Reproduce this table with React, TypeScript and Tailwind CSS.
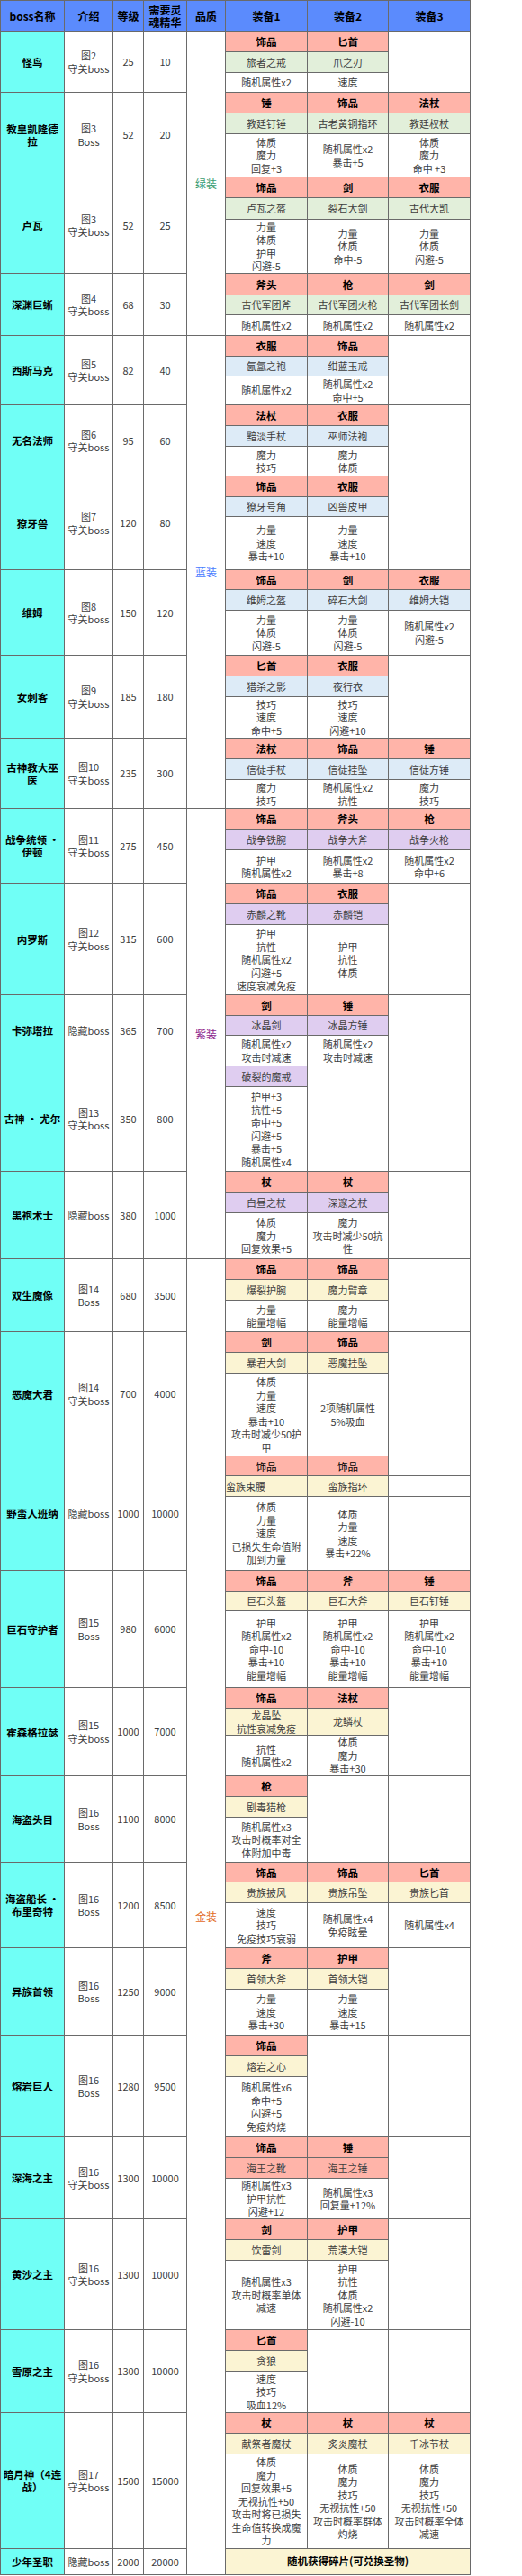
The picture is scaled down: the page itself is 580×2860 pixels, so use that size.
import React from 'react';

type EqObj = { t?: string; n: string[]; a: string[]; tn?: boolean; left?: boolean; salmon?: boolean };
type Eq = EqObj | null | 'grid';
type Boss = {
  name: string;
  intro: string[];
  lv: string;
  es: string;
  h: string[];
  tier: 'g' | 'b' | 'p' | 'y';
  eq?: Eq[];
  q?: { label: string; cls: string };
  final?: boolean;
};

const A19 = ['护甲', '随机属性x2', '命中-10', '暴击+10', '能量增幅'];

const rows: Boss[] = [
  { name: '怪鸟', intro: ['图2', '守关boss'], lv: '25', es: '10', h: ['h-[23px]', 'h-[23px]', 'h-[22px]'], tier: 'g', q: { label: '绿装', cls: 'text-[#3a9c70]' },
    eq: [{ t: '饰品', n: ['旅者之戒'], a: ['随机属性x2'] }, { t: '匕首', n: ['爪之刃'], a: ['速度'] }, null] },
  { name: '教皇凯隆德拉', intro: ['图3', 'Boss'], lv: '52', es: '20', h: ['h-[23px]', 'h-[23px]', 'h-[48px]'], tier: 'g',
    eq: [{ t: '锤', n: ['教廷钉锤'], a: ['体质', '魔力', '回复+3'] }, { t: '饰品', n: ['古老黄铜指环'], a: ['随机属性x2', '暴击+5'] }, { t: '法杖', n: ['教廷权杖'], a: ['体质', '魔力', '命中 +3'] }] },
  { name: '卢瓦', intro: ['图3', '守关boss'], lv: '52', es: '25', h: ['h-[23px]', 'h-[24px]', 'h-[60px]'], tier: 'g',
    eq: [{ t: '饰品', n: ['卢瓦之盔'], a: ['力量', '体质', '护甲', '闪避-5'] }, { t: '剑', n: ['裂石大剑'], a: ['力量', '体质', '命中-5'] }, { t: '衣服', n: ['古代大凯'], a: ['力量', '体质', '闪避-5'] }] },
  { name: '深渊巨蜥', intro: ['图4', '守关boss'], lv: '68', es: '30', h: ['h-[24px]', 'h-[22px]', 'h-[23px]'], tier: 'g',
    eq: [{ t: '斧头', n: ['古代军团斧'], a: ['随机属性x2'] }, { t: '枪', n: ['古代军团火枪'], a: ['随机属性x2'] }, { t: '剑', n: ['古代军团长剑'], a: ['随机属性x2'] }] },
  { name: '西斯马克', intro: ['图5', '守关boss'], lv: '82', es: '40', h: ['h-[23px]', 'h-[22px]', 'h-[32px]'], tier: 'b', q: { label: '蓝装', cls: 'text-[#4a7bff]' },
    eq: [{ t: '衣服', n: ['氤氲之袍'], a: ['随机属性x2'] }, { t: '饰品', n: ['绀蓝玉戒'], a: ['随机属性x2', '命中+5'] }, null] },
  { name: '无名法师', intro: ['图6', '守关boss'], lv: '95', es: '60', h: ['h-[23px]', 'h-[23px]', 'h-[33px]'], tier: 'b',
    eq: [{ t: '法杖', n: ['黯淡手杖'], a: ['魔力', '技巧'] }, { t: '衣服', n: ['巫师法袍'], a: ['魔力', '体质'] }, null] },
  { name: '獠牙兽', intro: ['图7', '守关boss'], lv: '120', es: '80', h: ['h-[23px]', 'h-[22px]', 'h-[59px]'], tier: 'b',
    eq: [{ t: '饰品', n: ['獠牙号角'], a: ['力量', '速度', '暴击+10'] }, { t: '衣服', n: ['凶兽皮甲'], a: ['力量', '速度', '暴击+10'] }, null] },
  { name: '维姆', intro: ['图8', '守关boss'], lv: '150', es: '120', h: ['h-[22px]', 'h-[23px]', 'h-[50px]'], tier: 'b',
    eq: [{ t: '饰品', n: ['维姆之盔'], a: ['力量', '体质', '闪避-5'] }, { t: '剑', n: ['碎石大剑'], a: ['力量', '体质', '闪避-5'] }, { t: '衣服', n: ['维姆大铠'], a: ['随机属性x2', '闪避-5'] }] },
  { name: '女刺客', intro: ['图9', '守关boss'], lv: '185', es: '180', h: ['h-[23px]', 'h-[23px]', 'h-[46px]'], tier: 'b',
    eq: [{ t: '匕首', n: ['猎杀之影'], a: ['技巧', '速度', '命中+5'] }, { t: '衣服', n: ['夜行衣'], a: ['技巧', '速度', '闪避+10'] }, null] },
  { name: '古神教大巫医', intro: ['图10', '守关boss'], lv: '235', es: '300', h: ['h-[23px]', 'h-[23px]', 'h-[32px]'], tier: 'b',
    eq: [{ t: '法杖', n: ['信徒手杖'], a: ['魔力', '技巧'] }, { t: '饰品', n: ['信徒挂坠'], a: ['随机属性x2', '抗性'] }, { t: '锤', n: ['信徒方锤'], a: ['魔力', '技巧'] }] },
  { name: '战争统领 · 伊顿', intro: ['图11', '守关boss'], lv: '275', es: '450', h: ['h-[23px]', 'h-[23px]', 'h-[37px]'], tier: 'p', q: { label: '紫装', cls: 'text-[#8b1c8b]' },
    eq: [{ t: '饰品', n: ['战争铁腕'], a: ['护甲', '随机属性x2'] }, { t: '斧头', n: ['战争大斧'], a: ['随机属性x2', '暴击+8'] }, { t: '枪', n: ['战争火枪'], a: ['随机属性x2', '命中+6'] }] },
  { name: '内罗斯', intro: ['图12', '守关boss'], lv: '315', es: '600', h: ['h-[23px]', 'h-[23px]', 'h-[78px]'], tier: 'p',
    eq: [{ t: '饰品', n: ['赤麟之靴'], a: ['护甲', '抗性', '随机属性x2', '闪避+5', '速度衰减免疫'] }, { t: '衣服', n: ['赤麟铠'], a: ['护甲', '抗性', '体质'] }, null] },
  { name: '卡弥塔拉', intro: ['隐藏boss'], lv: '365', es: '700', h: ['h-[23px]', 'h-[22px]', 'h-[34px]'], tier: 'p',
    eq: [{ t: '剑', n: ['冰晶剑'], a: ['随机属性x2', '攻击时减速'] }, { t: '锤', n: ['冰晶方锤'], a: ['随机属性x2', '攻击时减速'] }, null] },
  { name: '古神 · 尤尔', intro: ['图13', '守关boss'], lv: '350', es: '800', h: ['h-[23px]', 'h-[94px]'], tier: 'p',
    eq: [{ n: ['破裂的魔戒'], a: ['护甲+3', '抗性+5', '命中+5', '闪避+5', '暴击+5', '随机属性x4'] }, null, null] },
  { name: '黑袍术士', intro: ['隐藏boss'], lv: '380', es: '1000', h: ['h-[23px]', 'h-[23px]', 'h-[51px]'], tier: 'p',
    eq: [{ t: '杖', n: ['白昼之杖'], a: ['体质', '魔力', '回复效果+5'] }, { t: '杖', n: ['深邃之杖'], a: ['魔力', '攻击时减少50抗性'] }, null] },
  { name: '双生魔像', intro: ['图14', 'Boss'], lv: '680', es: '3500', h: ['h-[23px]', 'h-[23px]', 'h-[35px]'], tier: 'y', q: { label: '金装', cls: 'text-[#e26a1e]' },
    eq: [{ t: '饰品', n: ['爆裂护腕'], a: ['力量', '能量增幅'] }, { t: '饰品', n: ['魔力臂章'], a: ['魔力', '能量增幅'] }, null] },
  { name: '恶魔大君', intro: ['图14', '守关boss'], lv: '700', es: '4000', h: ['h-[23px]', 'h-[23px]', 'h-[92px]'], tier: 'y',
    eq: [{ t: '剑', n: ['暴君大剑'], a: ['体质', '力量', '速度', '暴击+10', '攻击时减少50护甲'] }, { t: '饰品', n: ['恶魔挂坠'], a: ['2项随机属性', '5%吸血'] }, null] },
  { name: '野蛮人班纳', intro: ['隐藏boss'], lv: '1000', es: '10000', h: ['h-[22px]', 'h-[23px]', 'h-[82px]'], tier: 'y',
    eq: [{ t: '饰品', tn: true, left: true, n: ['蛮族束腰'], a: ['体质', '力量', '速度', '已损失生命值附加到力量'] }, { t: '饰品', tn: true, n: ['蛮族指环'], a: ['体质', '力量', '速度', '暴击+22%'] }, 'grid'] },
  { name: '巨石守护者', intro: ['图15', 'Boss'], lv: '980', es: '6000', h: ['h-[23px]', 'h-[22px]', 'h-[85px]'], tier: 'y',
    eq: [{ t: '饰品', n: ['巨石头盔'], a: A19 }, { t: '斧', n: ['巨石大斧'], a: A19 }, { t: '锤', n: ['巨石钉锤'], a: A19 }] },
  { name: '霍森格拉瑟', intro: ['图15', '守关boss'], lv: '1000', es: '7000', h: ['h-[23px]', 'h-[30px]', 'h-[45px]'], tier: 'y',
    eq: [{ t: '饰品', n: ['龙晶坠', '抗性衰减免疫'], a: ['抗性', '随机属性x2'] }, { t: '法杖', n: ['龙鳞杖'], a: ['体质', '魔力', '暴击+30'] }, null] },
  { name: '海盗头目', intro: ['图16', 'Boss'], lv: '1100', es: '8000', h: ['h-[23px]', 'h-[23px]', 'h-[50px]'], tier: 'y',
    eq: [{ t: '枪', n: ['剧毒猎枪'], a: ['随机属性x3', '攻击时概率对全体附加中毒'] }, null, null] },
  { name: '海盗船长 · 布里奇特', intro: ['图16', 'Boss'], lv: '1200', es: '8500', h: ['h-[22px]', 'h-[23px]', 'h-[50px]'], tier: 'y',
    eq: [{ t: '饰品', n: ['贵族披风'], a: ['速度', '技巧', '免疫技巧衰弱'] }, { t: '饰品', n: ['贵族吊坠'], a: ['随机属性x4', '免疫眩晕'] }, { t: '匕首', n: ['贵族匕首'], a: ['随机属性x4'] }] },
  { name: '异族首领', intro: ['图16', 'Boss'], lv: '1250', es: '9000', h: ['h-[23px]', 'h-[23px]', 'h-[51px]'], tier: 'y',
    eq: [{ t: '斧', n: ['首领大斧'], a: ['力量', '速度', '暴击+30'] }, { t: '护甲', n: ['首领大铠'], a: ['力量', '速度', '暴击+15'] }, null] },
  { name: '熔岩巨人', intro: ['图16', 'Boss'], lv: '1280', es: '9500', h: ['h-[23px]', 'h-[23px]', 'h-[67px]'], tier: 'y',
    eq: [{ t: '饰品', n: ['熔岩之心'], a: ['随机属性x6', '命中+5', '闪避+5', '免疫灼烧'] }, null, null] },
  { name: '深海之主', intro: ['图16', '守关boss'], lv: '1300', es: '10000', h: ['h-[23px]', 'h-[23px]', 'h-[45px]'], tier: 'y',
    eq: [{ t: '饰品', salmon: true, n: ['海王之靴'], a: ['随机属性x3', '护甲抗性', '闪避+12'] }, { t: '锤', salmon: true, n: ['海王之锤'], a: ['随机属性x3', '回复量+12%'] }, null] },
  { name: '黄沙之主', intro: ['图16', '守关boss'], lv: '1300', es: '10000', h: ['h-[23px]', 'h-[23px]', 'h-[77px]'], tier: 'y',
    eq: [{ t: '剑', n: ['饮雷剑'], a: ['随机属性x3', '攻击时概率单体减速'] }, { t: '护甲', n: ['荒漠大铠'], a: ['护甲', '抗性', '体质', '随机属性x2', '闪避-10'] }, null] },
  { name: '雪原之主', intro: ['图16', '守关boss'], lv: '1300', es: '10000', h: ['h-[23px]', 'h-[23px]', 'h-[46px]'], tier: 'y',
    eq: [{ t: '匕首', n: ['贪狼'], a: ['速度', '技巧', '吸血12%'] }, null, null] },
  { name: '暗月神（4连战）', intro: ['图17', '守关boss'], lv: '1500', es: '15000', h: ['h-[23px]', 'h-[23px]', 'h-[105px]'], tier: 'y',
    eq: [
      { t: '杖', n: ['献祭者魔杖'], a: ['体质', '魔力', '回复效果+5', '无视抗性+50', '攻击时将已损失生命值转换成魔力'] },
      { t: '杖', n: ['炙炎魔杖'], a: ['体质', '魔力', '技巧', '无视抗性+50', '攻击时概率群体灼烧'] },
      { t: '杖', n: ['千冰节杖'], a: ['体质', '魔力', '技巧', '无视抗性+50', '攻击时概率全体减速'] },
    ] },
  { name: '少年圣职', intro: ['隐藏boss'], lv: '2000', es: '20000', h: ['h-[29px]'], tier: 'y', final: true },
];

const nameBg: Record<string, string> = {
  g: 'bg-[#e2efda]',
  b: 'bg-[#ddebf7]',
  p: 'bg-[#dfcdf0]',
  y: 'bg-[#fbf4d3]',
};

const B = 'border border-[#6a6a6a] align-middle text-center px-[3px] py-0';
const T = 'text-[11px] leading-[14.5px] text-[#3d3d3d]';

function rowCount(b: Boss) {
  if (b.final) return 1;
  const hasType = (b.eq ?? []).some((e) => e && e !== 'grid' && e.t);
  return hasType ? 3 : 2;
}

function typeCell(e: EqObj, k: number) {
  return (
    <td key={k} className={`${B} bg-[#ffb4a9] text-[11.5px] leading-[14px] text-black ${e.tn ? 'font-normal' : 'font-bold'}`}>
      {e.t}
    </td>
  );
}
function nameCell(e: EqObj, tier: string, k: number) {
  return (
    <td key={k} className={`${B} ${T} ${e.salmon ? 'bg-[#ffb4a9]' : nameBg[tier]} ${e.left ? 'text-left' : 'text-center'}`}>
      {e.n.map((l, i) => (
        <div key={i} className={e.left ? 'text-left -ml-[3px]' : ''}>{l}</div>
      ))}
    </td>
  );
}
function attrCell(e: EqObj, k: number) {
  return (
    <td key={k} className={`${B} ${T} bg-white`}>
      {e.a.map((l, i) => (
        <div key={i}>{l}</div>
      ))}
    </td>
  );
}

function BossRows({ b, qSpan }: { b: Boss; qSpan: number }) {
  const n = rowCount(b);
  const eq = b.eq ?? [];
  const hasType = n === 3;
  const lead = [
    <td key="nm" rowSpan={n} className="border border-[#6a6a6a] align-middle text-center px-[1px] py-0 bg-[#70fff6] font-bold text-[11.5px] leading-[14px] text-black">
      {b.name}
    </td>,
    <td key="in" rowSpan={n} className={`${B} ${T} bg-white`}>
      {b.intro.map((l, i) => (
        <div key={i}>{l}</div>
      ))}
    </td>,
    <td key="lv" rowSpan={n} className={`${B} ${T} bg-white`}>{b.lv}</td>,
    <td key="es" rowSpan={n} className={`${B} ${T} bg-white`}>{b.es}</td>,
  ];
  if (b.q) {
    lead.push(
      <td key="q" rowSpan={qSpan} className={`${B} bg-white text-[12px] ${b.q.cls}`}>
        {b.q.label}
      </td>
    );
  }

  if (b.final) {
    return (
      <tr className={b.h[0]}>
        {lead}
        <td colSpan={3} className={`${B} bg-[#fbf4d3] font-bold text-[11.5px] text-black`}>
          随机获得碎片(可兑换圣物)
        </td>
      </tr>
    );
  }

  const r1 = eq.map((e, k) => {
    if (e === null) return <td key={k} rowSpan={n} className={`${B} bg-white`} />;
    if (e === 'grid') return <td key={k} className={`${B} bg-white`} />;
    return hasType ? typeCell(e, k) : nameCell(e, b.tier, k);
  });
  const r2 = eq.map((e, k) => {
    if (e === null) return null;
    if (e === 'grid') return <td key={k} className={`${B} bg-white`} />;
    return hasType ? nameCell(e, b.tier, k) : attrCell(e, k);
  });
  const r3 = hasType
    ? eq.map((e, k) => {
        if (e === null) return null;
        if (e === 'grid') return <td key={k} className={`${B} bg-white`} />;
        return attrCell(e, k);
      })
    : null;

  return (
    <>
      <tr className={b.h[0]}>
        {lead}
        {r1}
      </tr>
      <tr className={b.h[1]}>{r2}</tr>
      {r3 && <tr className={b.h[2]}>{r3}</tr>}
    </>
  );
}

export default function App() {
  const spans: number[] = rows.map(() => 0);
  let start = -1;
  rows.forEach((b, i) => {
    if (b.q) start = i;
    spans[start] += rowCount(b);
  });

  const H = `${B} bg-[#5b8bfd] font-bold text-[12px] leading-[14px] text-black`;

  return (
    <div className="w-[580px] min-h-[2860px] bg-white font-['Noto_Sans_CJK_SC','Noto_Sans',sans-serif]">
      <table className="w-[522px] table-fixed border-collapse">
        <colgroup>
          <col className="w-[71px]" />
          <col className="w-[54px]" />
          <col className="w-[34px]" />
          <col className="w-[48px]" />
          <col className="w-[43px]" />
          <col className="w-[91px]" />
          <col className="w-[90px]" />
          <col className="w-[91px]" />
        </colgroup>
        <tbody>
          <tr className="h-[34px]">
            <td className={H}>boss名称</td>
            <td className={H}>介绍</td>
            <td className={H}>等级</td>
            <td className={H}>需要灵魂精华</td>
            <td className={H}>品质</td>
            <td className={H}>装备1</td>
            <td className={H}>装备2</td>
            <td className={H}>装备3</td>
          </tr>
          {rows.map((b, i) => (
            <BossRows key={i} b={b} qSpan={spans[i]} />
          ))}
        </tbody>
      </table>
    </div>
  );
}
